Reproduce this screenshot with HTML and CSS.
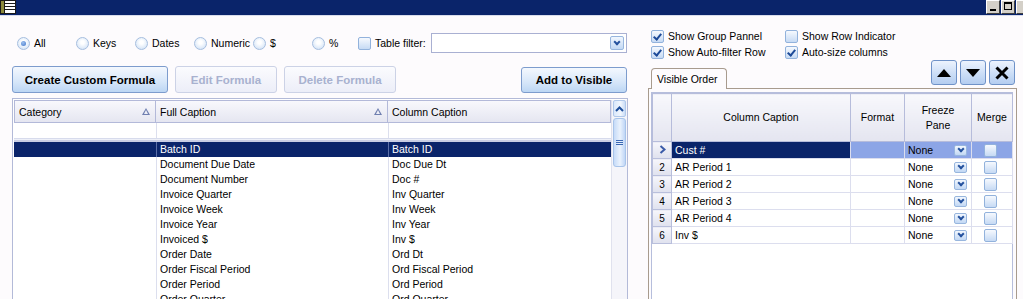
FILE: index.html
```html
<!DOCTYPE html>
<html lang="en">
<head>
  <meta charset="UTF-8">
  <title>Column Chooser</title>
  <link rel="stylesheet" href="styles.css">
</head>
<body>
  <div class="titlebar">
    <svg class="app-icon" width="16" height="14" viewBox="0 0 16 14">
      <rect x="0" y="0" width="16" height="14" fill="#1a1a1a"/>
      <rect x="1" y="1" width="3" height="12" fill="#8c8a3c"/>
      <rect x="5" y="1" width="10" height="2" fill="#fff"/>
      <rect x="5" y="4" width="10" height="2" fill="#fff"/>
      <rect x="5" y="7" width="10" height="2" fill="#fff"/>
      <rect x="5" y="10" width="10" height="3" fill="#fff"/>
    </svg>
    <div class="win-buttons">
      <span class="win-btn"><span class="glyph-min"></span></span>
      <span class="win-btn"><span class="glyph-max"></span></span>
      <span class="win-btn cut"></span>
    </div>
  </div>

  <div class="main">
    <div class="left">
      <div class="filters">
        <label class="opt first"><span class="radio checked"></span>All</label>
        <label class="opt"><span class="radio"></span>Keys</label>
        <label class="opt"><span class="radio"></span>Dates</label>
        <label class="opt"><span class="radio"></span>Numeric</label>
        <label class="opt"><span class="radio"></span>$</label>
        <label class="opt narrow"><span class="radio"></span>%</label>
        <label class="opt"><span class="check"></span>Table filter:</label>
        <div class="combo"><span class="drop-btn big"></span></div>
      </div>

      <div class="actions">
        <button class="btn wide">Create Custom Formula</button>
        <button class="btn edit" disabled>Edit Formula</button>
        <button class="btn del" disabled>Delete Formula</button>
        <button class="btn add">Add to Visible</button>
      </div>

      <div class="list-grid">
        <div class="list-body">
          <div class="list-head">
            <div class="hcell c1">Category<span class="sort"></span></div>
            <div class="hcell c2">Full Caption<span class="sort"></span></div>
            <div class="hcell c3">Column Caption</div>
          </div>
          <div class="list-row filter-row"><div class="c1"></div><div class="c2"></div><div class="c3"></div></div>
          <div class="filter-sep"></div>
          <div class="list-row selected"><div class="c1"></div><div class="c2">Batch ID</div><div class="c3">Batch ID</div></div>
          <div class="list-row"><div class="c1"></div><div class="c2">Document Due Date</div><div class="c3">Doc Due Dt</div></div>
          <div class="list-row"><div class="c1"></div><div class="c2">Document Number</div><div class="c3">Doc #</div></div>
          <div class="list-row"><div class="c1"></div><div class="c2">Invoice Quarter</div><div class="c3">Inv Quarter</div></div>
          <div class="list-row"><div class="c1"></div><div class="c2">Invoice Week</div><div class="c3">Inv Week</div></div>
          <div class="list-row"><div class="c1"></div><div class="c2">Invoice Year</div><div class="c3">Inv Year</div></div>
          <div class="list-row"><div class="c1"></div><div class="c2">Invoiced $</div><div class="c3">Inv $</div></div>
          <div class="list-row"><div class="c1"></div><div class="c2">Order Date</div><div class="c3">Ord Dt</div></div>
          <div class="list-row"><div class="c1"></div><div class="c2">Order Fiscal Period</div><div class="c3">Ord Fiscal Period</div></div>
          <div class="list-row"><div class="c1"></div><div class="c2">Order Period</div><div class="c3">Ord Period</div></div>
          <div class="list-row"><div class="c1"></div><div class="c2">Order Quarter</div><div class="c3">Ord Quarter</div></div>
        </div>
        <div class="scrollbar">
          <div class="sb-arrow">
            <svg width="9" height="6" viewBox="0 0 9 6"><polyline points="1,5 4.5,1.5 8,5" fill="none" stroke="#1f4f9c" stroke-width="2"/></svg>
          </div>
          <div class="sb-thumb"><span class="grip"></span></div>
        </div>
      </div>
    </div>

    <div class="right">
      <div class="options">
        <label class="opt col"><span class="check on"></span>Show Group Pannel</label>
        <label class="opt"><span class="check"></span>Show Row Indicator</label>
        <label class="opt col"><span class="check on"></span>Show Auto-filter Row</label>
        <label class="opt"><span class="check on"></span>Auto-size columns</label>
      </div>

      <div class="tab-strip">
        <div class="tab">Visible Order</div>
        <div class="tools">
          <button class="tool">
            <svg width="14" height="8" viewBox="0 0 14 8"><polygon points="0,8 7,0 14,8" fill="#000"/></svg>
          </button>
          <button class="tool">
            <svg width="14" height="8" viewBox="0 0 14 8"><polygon points="0,0 14,0 7,8" fill="#000"/></svg>
          </button>
          <button class="tool">
            <svg width="14" height="14" viewBox="0 0 14 14"><path d="M1.5 1.5 L12.5 12.5 M12.5 1.5 L1.5 12.5" stroke="#000" stroke-width="3"/></svg>
          </button>
        </div>
      </div>

      <div class="tab-panel">
        <div class="order-grid">
          <table class="order">
            <colgroup>
              <col class="w-ind"><col class="w-cap"><col class="w-fmt"><col class="w-frz"><col class="w-mrg">
            </colgroup>
            <thead>
              <tr>
                <th></th><th>Column Caption</th><th>Format</th><th>Freeze<br>Pane</th><th>Merge</th>
              </tr>
            </thead>
            <tbody>
              <tr class="current">
                <td class="ind"><svg width="7" height="9" viewBox="0 0 7 9"><polyline points="1.5,1 5.5,4.5 1.5,8" fill="none" stroke="#3a5aa8" stroke-width="2"/></svg></td>
                <td class="cap">Cust #</td><td></td>
                <td><div class="frz">None<span class="drop-btn"></span></div></td>
                <td class="mrg"><span class="check"></span></td>
              </tr>
              <tr>
                <td class="ind">2</td><td>AR Period 1</td><td></td>
                <td><div class="frz">None<span class="drop-btn"></span></div></td>
                <td class="mrg"><span class="check"></span></td>
              </tr>
              <tr>
                <td class="ind">3</td><td>AR Period 2</td><td></td>
                <td><div class="frz">None<span class="drop-btn"></span></div></td>
                <td class="mrg"><span class="check"></span></td>
              </tr>
              <tr>
                <td class="ind">4</td><td>AR Period 3</td><td></td>
                <td><div class="frz">None<span class="drop-btn"></span></div></td>
                <td class="mrg"><span class="check"></span></td>
              </tr>
              <tr>
                <td class="ind">5</td><td>AR Period 4</td><td></td>
                <td><div class="frz">None<span class="drop-btn"></span></div></td>
                <td class="mrg"><span class="check"></span></td>
              </tr>
              <tr>
                <td class="ind">6</td><td>Inv $</td><td></td>
                <td><div class="frz">None<span class="drop-btn"></span></div></td>
                <td class="mrg"><span class="check"></span></td>
              </tr>
            </tbody>
          </table>
        </div>
      </div>
    </div>
  </div>
</body>
</html>
```

FILE: styles.css
```css
body {
  margin: 0;
  height: 299px;
  overflow: hidden;
  font-family: 'Liberation Sans', Arial, sans-serif;
  font-size: 10.5px;
  color: #000;
  background-color: #fdfbfd;
}
.titlebar {
  height: 15px;
  background-color: #0a246a;
  display: flex;
  justify-content: space-between;
  align-items: flex-start;
  border-bottom: 1px solid #d8dcec;
}
.app-icon {
  display: block;
}
.win-buttons {
  display: flex;
  gap: 1px;
  margin-right: -7px;
}
.win-btn {
  width: 14px;
  height: 14px;
  box-sizing: border-box;
  background: #d4d0c8;
  border: 1px solid;
  border-color: #fff #404040 #404040 #fff;
  position: relative;
}
.glyph-min {
  position: absolute;
  left: 3px;
  bottom: 2px;
  width: 6px;
  height: 2px;
  background: #000;
}
.glyph-max {
  position: absolute;
  left: 2px;
  top: 1px;
  width: 8px;
  height: 8px;
  box-sizing: border-box;
  border: 1px solid #000;
  border-top-width: 2px;
}
.main {
  display: flex;
  padding-left: 12px;
}
.left {
  width: 616px;
}
.right {
  width: 369px;
  margin-left: 20px;
}

/* radio / check controls */
.opt {
  display: flex;
  align-items: center;
  gap: 4px;
  white-space: nowrap;
  width: 59px;
}
.opt.first {
  margin-left: 5px;
}
.opt.narrow {
  width: 46px;
}
.radio {
  width: 11px;
  height: 11px;
  border-radius: 50%;
  border: 1px solid #a6bedf;
  background: radial-gradient(circle at 50% 40%, #ffffff 20%, #cfe0f5 90%);
  position: relative;
  flex: none;
}
.radio.checked::after {
  content: '';
  position: absolute;
  left: 3px;
  top: 3px;
  width: 5px;
  height: 5px;
  border-radius: 50%;
  background: radial-gradient(circle at 40% 35%, #9cc0f0, #3f74c8);
}
.check {
  width: 11px;
  height: 11px;
  border: 1px solid #92b2dc;
  border-radius: 2px;
  background: linear-gradient(#f6f9fe, #c6daf4);
  position: relative;
  flex: none;
}
.check.on::after {
  content: '';
  position: absolute;
  left: 3px;
  top: 1px;
  width: 3px;
  height: 6px;
  border: solid #1d4a98;
  border-width: 0 2px 2px 0;
  transform: rotate(40deg);
}
.filters {
  display: flex;
  align-items: center;
  height: 20px;
  margin-top: 17px;
}
.filters .opt:nth-child(7) {
  width: auto;
  margin-right: 5px;
}
.combo {
  flex: 1;
  height: 20px;
  box-sizing: border-box;
  border: 1px solid #a9b0d2;
  background: #fff;
  display: flex;
  align-items: center;
  justify-content: flex-end;
  padding-right: 2px;
  margin-right: 1px;
}
.drop-btn {
  width: 13px;
  height: 11px;
  box-sizing: border-box;
  border: 1px solid #98b6de;
  border-radius: 2px;
  background: linear-gradient(#f2f7fe, #c2d8f4);
  position: relative;
  flex: none;
}
.drop-btn.big {
  width: 14px;
  height: 14px;
}
.drop-btn::after {
  content: '';
  position: absolute;
  left: 50%;
  top: 50%;
  width: 3px;
  height: 3px;
  border: solid #24519e;
  border-width: 0 2px 2px 0;
  transform: translate(-50%, -70%) rotate(45deg);
}

/* buttons */
.actions {
  display: flex;
  gap: 7px;
  margin-top: 13px;
  height: 27px;
}
.btn {
  font-family: 'Liberation Sans', Arial, sans-serif;
  font-size: 11.5px;
  font-weight: 700;
  border: 1px solid #7d9ccd;
  border-radius: 3px;
  background: linear-gradient(#f4f8fe, #d6e6f9 60%, #bcd6f4);
  color: #000;
  padding: 0;
}
.btn.wide {
  width: 156px;
}
.btn.edit {
  width: 102px;
}
.btn.del {
  width: 112px;
}
.btn.add {
  width: 106px;
  margin-left: auto;
  margin-top: 1px;
  margin-right: 1px;
}
.btn:disabled {
  border-color: #ccd2e6;
  background: linear-gradient(#fbfbfe, #eceef8);
  color: #a8b1cf;
}

/* field list grid */
.list-grid {
  margin-top: 5px;
  height: 210px;
  border: 1px solid #b3bad8;
  padding: 1px 0 0 1px;
  display: flex;
  background: #fff;
  overflow: hidden;
}
.list-body {
  width: 597px;
}
.list-head {
  display: flex;
  height: 23px;
}
.hcell {
  box-sizing: border-box;
  height: 23px;
  border: 1px solid #b3b9d9;
  border-left: none;
  background: linear-gradient(#f8f8fc, #e5e6f1);
  display: flex;
  align-items: center;
  padding-left: 4px;
  position: relative;
}
.hcell.c1 {
  border-left: 1px solid #b3b9d9;
}
.sort {
  position: absolute;
  right: 5px;
  top: 7px;
  width: 0;
  height: 0;
  border-left: 4px solid transparent;
  border-right: 4px solid transparent;
  border-bottom: 7px solid #6f7fb0;
}
.sort::after {
  content: '';
  position: absolute;
  left: -2px;
  top: 2px;
  border-left: 2px solid transparent;
  border-right: 2px solid transparent;
  border-bottom: 4px solid #eeeff6;
}
.c1 { width: 142px; box-sizing: border-box; }
.c2 { width: 232px; box-sizing: border-box; }
.c3 { width: 223px; box-sizing: border-box; }
.list-row {
  display: flex;
  height: 15px;
  line-height: 15px;
}
.list-row > div {
  padding-left: 3px;
  white-space: nowrap;
  overflow: hidden;
}
.list-row .c2,
.list-row .c3 {
  border-left: 1px solid #dcdfee;
}
.filter-row {
  height: 15px;
}
.filter-sep {
  height: 4px;
  box-sizing: border-box;
  border-top: 1px solid #d7dbec;
  border-bottom: 2px solid #c9cee4;
  background: #eef0f8;
}
.list-row.selected {
  background: #0a246a;
  color: #fff;
}
.list-row.selected .c2,
.list-row.selected .c3 {
  border-left-color: #5a6ea8;
}
.scrollbar {
  width: 17px;
  background: #f5f5fa;
  border-left: 1px solid #e0e2ee;
  display: flex;
  flex-direction: column;
}
.sb-arrow {
  height: 15px;
  margin: 0 1px;
  border: 1px solid #b0c8ea;
  border-radius: 2px;
  background: linear-gradient(90deg, #dae8fb, #f2f7fe 60%, #cadcf6);
  display: flex;
  align-items: center;
  justify-content: center;
}
.sb-thumb {
  height: 47px;
  margin: 1px 1px 0;
  border: 1px solid #a8c4ea;
  border-radius: 3px;
  background: linear-gradient(90deg, #c6dbf8, #eaf2fd 55%, #c0d6f6);
  display: flex;
  align-items: center;
  justify-content: center;
}
.grip {
  width: 7px;
  height: 5px;
  border-top: 1px solid #3a68b4;
  border-bottom: 1px solid #3a68b4;
  position: relative;
  box-sizing: border-box;
}
.grip::after {
  content: '';
  position: absolute;
  left: 0;
  right: 0;
  top: 1px;
  height: 1px;
  background: #3a68b4;
}

/* right side */
.options {
  display: grid;
  grid-template-columns: 134px auto;
  margin-top: 12px;
  padding-left: 3px;
}
.options .opt {
  width: auto;
  height: 16px;
  gap: 4px;
}
.tab-strip {
  display: flex;
  height: 28px;
  align-items: flex-start;
}
.tab {
  margin-top: 8px;
  margin-left: 3px;
  height: 21px;
  width: 76px;
  box-sizing: border-box;
  border: 1px solid #a89b8e;
  border-bottom: none;
  border-radius: 4px 4px 0 0;
  background: #fdfbfd;
  display: flex;
  align-items: center;
  padding-left: 5px;
  position: relative;
  z-index: 1;
}
.tools {
  margin-left: auto;
  margin-right: 2px;
  display: flex;
  gap: 3px;
}
.tool {
  width: 26px;
  height: 25px;
  padding: 0;
  border: 1px solid #6f92c8;
  border-radius: 3px;
  background: linear-gradient(#edf3fd, #c9dcf6 60%, #b4cdf0);
  display: flex;
  align-items: center;
  justify-content: center;
}
.tab-panel {
  height: 220px;
  border: 1px solid #a89b8e;
  padding: 3px 3px 0 2px;
  background: #fdfbfd;
}
.order-grid {
  height: 220px;
  border: 1px solid #b6bedc;
  background: #fff;
}
.order {
  border-collapse: collapse;
  table-layout: fixed;
  width: 360px;
}
.w-ind { width: 19px; }
.w-cap { width: 179px; }
.w-fmt { width: 54px; }
.w-frz { width: 67px; }
.w-mrg { width: 41px; }
.order th {
  height: 47px;
  padding: 0;
  font-weight: 400;
  line-height: 15px;
  text-align: center;
  background: linear-gradient(#f8f8fc, #e4e5f0);
  border: 1px solid #b6bcdb;
}
.order td {
  height: 16px;
  padding: 0 0 0 3px;
  border: 1px solid #dcdeee;
  white-space: nowrap;
  overflow: hidden;
}
.order td.ind {
  padding: 0;
  text-align: center;
  font-size: 10px;
  background: linear-gradient(#f6f6fb, #dfe1ee);
  border-color: #b9bfdc;
}
.order tr.current td {
  background: #8ca5e6;
}
.order tr.current td.cap {
  background: #0a246a;
  color: #fff;
}
.order tr.current td.ind {
  background: linear-gradient(#f6f6fb, #dfe1ee);
}
.frz {
  display: flex;
  align-items: center;
  justify-content: space-between;
  padding-right: 4px;
}
.order td.mrg {
  padding: 0 3px 0 0;
  text-align: center;
}
.order td.mrg .check {
  display: inline-block;
  vertical-align: middle;
}
```
